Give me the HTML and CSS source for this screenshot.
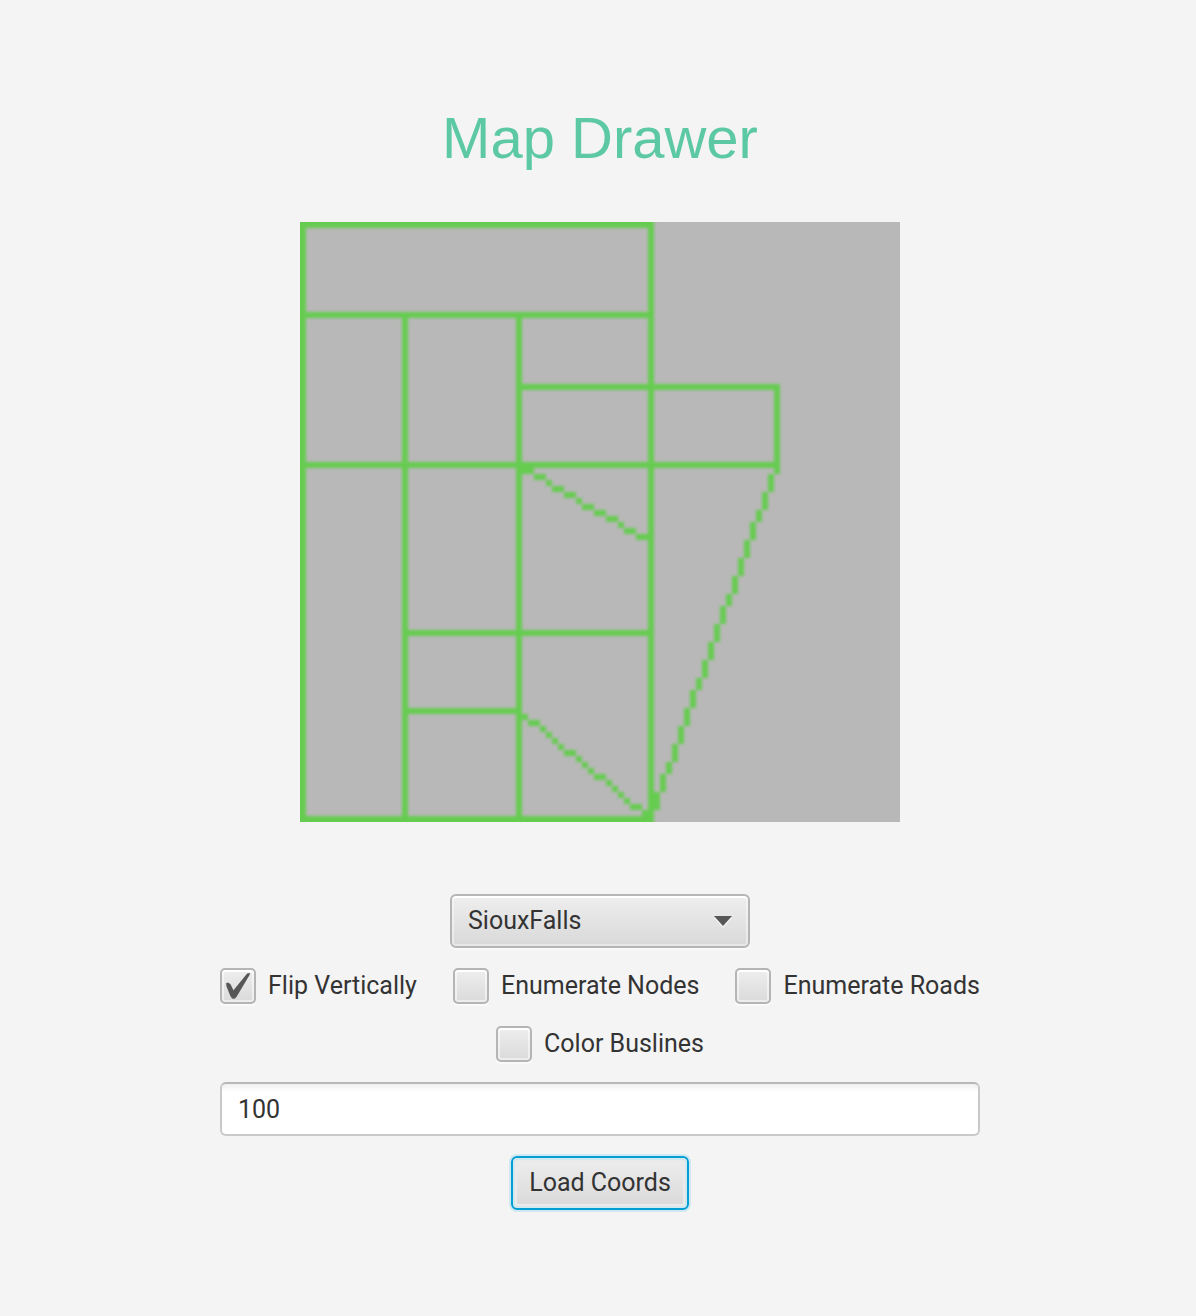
FILE: index.html
```html
<!DOCTYPE html>
<html lang="en">
<head>
<meta charset="utf-8">
<meta name="viewport" content="width=device-width, initial-scale=1">
<title>Map Drawer</title>
<link rel="stylesheet" href="styles.css">
</head>
<body>
<main class="page">
  <h1 class="title">Map Drawer</h1>
  <svg class="map" viewBox="0 0 100 100" role="img" aria-label="Road map">
    <defs>
      <filter id="smooth" x="-2" y="-2" width="104" height="104" filterUnits="userSpaceOnUse" color-interpolation-filters="sRGB">
        <feGaussianBlur stdDeviation="0.25"/>
      </filter>
    </defs>
    <g filter="url(#smooth)">
      <!-- streets on the grid -->
      <path class="road" d="M-1-1H59V1H-1zM-1-1H1V101H-1zM-1 99H59V101H-1zM58-1h1V101h-1zM17 15h1V101h-1zM36 15h1V101h-1zM79 27h1V42h-1zM0 15H59v1H0zM36 27H80v1H36zM0 40H80v1H0zM17 68H59v1H17zM17 81H37v1H17z"/>
      <!-- diagonal streets, one step per cell -->
      <path class="road" d="M37 41h2v1h-2zM39 42h2v1h-2zM41 43h1v1h-1zM42 44h2v1h-2zM44 45h2v1h-2zM46 46h1v1h-1zM47 47h2v1h-2zM49 48h2v1h-2zM51 49h2v1h-2zM53 50h1v1h-1zM54 51h2v1h-2zM56 52h2v1h-2z"/>
      <path class="road" d="M37 82h1v1h-1zM38 83h2v1h-2zM40 84h1v1h-1zM41 85h1v1h-1zM42 86h1v1h-1zM43 87h1v1h-1zM44 88h2v1h-2zM46 89h1v1h-1zM47 90h1v1h-1zM48 91h1v1h-1zM49 92h2v1h-2zM51 93h1v1h-1zM52 94h1v1h-1zM53 95h1v1h-1zM54 96h1v1h-1zM55 97h2v1h-2zM57 98h1v1h-1z"/>
      <path class="road" d="M78 42h1v3h-1zM77 45h1v3h-1zM76 48h1v2h-1zM75 50h1v3h-1zM74 53h1v3h-1zM73 56h1v3h-1zM72 59h1v3h-1zM71 62h1v2h-1zM70 64h1v3h-1zM69 67h1v3h-1zM68 70h1v3h-1zM67 73h1v3h-1zM66 76h1v2h-1zM65 78h1v3h-1zM64 81h1v3h-1zM63 84h1v3h-1zM62 87h1v3h-1zM61 90h1v2h-1zM60 92h1v3h-1zM59 95h1v3h-1z"/>
    </g>
  </svg>
  <form class="controls">
    <div class="picker">
      <select class="picker-select" aria-label="Map">
        <option selected>SiouxFalls</option>
      </select>
      <svg class="picker-arrow" viewBox="0 0 18 10" aria-hidden="true"><path d="M0 0H18L9 10z"/></svg>
    </div>
    <div class="options">
      <label class="option"><input class="tick" type="checkbox" checked>Flip Vertically</label>
      <label class="option"><input class="tick" type="checkbox">Enumerate Nodes</label>
      <label class="option"><input class="tick" type="checkbox">Enumerate Roads</label>
      <label class="option"><input class="tick" type="checkbox">Color Buslines</label>
    </div>
    <input class="field" type="text" value="100" aria-label="Size">
    <button class="load" type="button">Load Coords</button>
  </form>
</main>
</body>
</html>
```
FILE: styles.css
```css
* {
  box-sizing: border-box;
}

body {
  margin: 0;
  background: #f4f4f4;
  color: #333;
  font-family: Roboto, "Liberation Sans", sans-serif;
  font-size: 25px;
  line-height: 36px;
}

.page {
  display: flex;
  flex-direction: column;
  align-items: center;
  padding: 104px 20px 104px 24px;
}

.title {
  margin: 0 0 50px;
  color: #5cc9a4;
  font-family: "Liberation Sans", sans-serif;
  font-size: 58px;
  font-weight: 400;
  line-height: 68px;
}

.map {
  display: block;
  width: 100%;
  max-width: 600px;
  background: #b8b8b8;
}

.road {
  fill: #66cc50;
}

.controls {
  display: flex;
  flex-direction: column;
  align-items: center;
  gap: 20px;
  width: 100%;
  max-width: 760px;
  margin-top: 72px;
}

.picker {
  display: grid;
  align-items: center;
  width: 300px;
}

.picker-select,
.picker-arrow {
  grid-area: 1 / 1;
}

.picker-select,
.load {
  height: 54px;
  padding: 0 16px;
  border: 2px solid #b5b5b5;
  border-radius: 6px;
  background: linear-gradient(#eee, #d9d9d9);
  box-shadow: inset 0 0 0 2px rgba(255, 255, 255, 0.4), inset 0 2px 0 #fff, 0 2px 0 #fafafa;
  color: inherit;
  font: inherit;
}

.picker-select {
  appearance: none;
  width: 100%;
}

.picker-arrow {
  justify-self: end;
  width: 18px;
  height: 10px;
  margin-right: 18px;
  fill: #575757;
  filter: drop-shadow(0 2px 0 #f4f4f4);
  pointer-events: none;
}

.options {
  display: flex;
  flex-wrap: wrap;
  justify-content: center;
  gap: 22px 36px;
  width: 100%;
}

.option {
  display: flex;
  align-items: center;
  gap: 12px;
  white-space: nowrap;
}

.tick {
  appearance: none;
  display: grid;
  place-items: center;
  width: 36px;
  height: 36px;
  margin: 0;
  border: 2px solid #b5b5b5;
  border-radius: 5px;
  background: linear-gradient(#eee, #dadada);
  box-shadow: inset 0 0 0 2px rgba(255, 255, 255, 0.5), inset 0 2px 0 #fff, 0 2px 0 #fafafa;
}

.tick:checked::before {
  content: "";
  width: 24px;
  height: 26px;
  background: #575757;
  clip-path: polygon(0 39%, 8% 37%, 18% 42%, 31% 66%, 88% 2%, 100% 0, 98% 8%, 44% 91%, 36% 99%, 25% 98%, 18% 88%, 2% 52%);
}

.field {
  width: 100%;
  height: 54px;
  padding: 0 16px;
  border: 2px solid #c9c9c9;
  border-top-color: #b8b8b8;
  border-radius: 6px;
  background: linear-gradient(#f0f0f0, #fff 8px);
  color: inherit;
  font: inherit;
}

.load {
  border-color: #039ed3;
  box-shadow: 0 0 0 2px #cfe8f2, inset 0 0 0 2px #d3e9f0, inset 0 0 0 4px #eaeaea;
}
```
